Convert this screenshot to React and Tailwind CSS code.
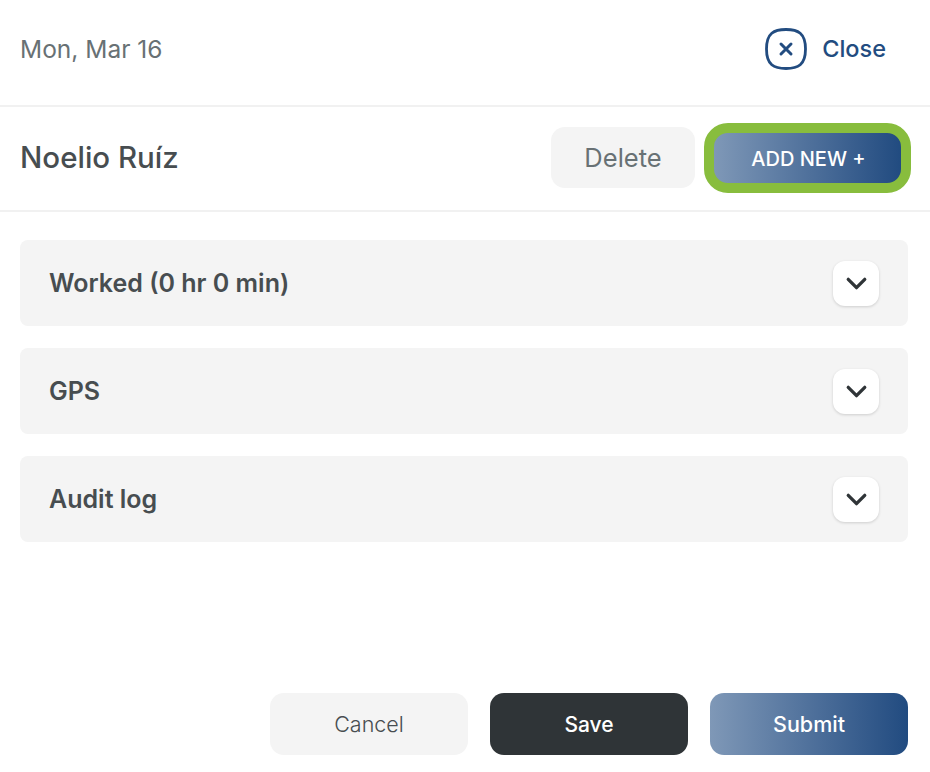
import { ChevronDown } from "lucide-react";

const sections = ["Worked (0 hr 0 min)", "GPS", "Audit log"];

function Section({ title }) {
  return (
    <div className="flex h-[86px] items-center justify-between rounded-[8px] bg-[#f4f4f4] pl-[29px] pr-[29px]">
      <span className="pt-[2px] text-[25px] font-semibold text-[#474d50]">{title}</span>
      <button className="flex h-[45px] w-[46px] items-center justify-center rounded-[12px] bg-white shadow-[0_1px_3px_rgba(0,0,0,0.16)]">
        <ChevronDown className="h-[33px] w-[33px] text-[#2f3437]" strokeWidth={2.4} />
      </button>
    </div>
  );
}

export default function App() {
  return (
    <div className="flex h-[772px] w-[930px] flex-col bg-white font-['Inter',sans-serif]">
      <header className="flex h-[107px] items-center justify-between border-b-2 border-[#f1f1f1] pb-[8px] pl-[20px] pr-[44px]">
        <span className="mt-[2px] text-[24.5px] text-[#687174]">Mon, Mar 16</span>
        <button className="flex items-center gap-[15px] text-[23.5px] font-medium text-[#224c80]">
          <svg width="42" height="42" viewBox="0 0 42 42" fill="none" stroke="#224c80">
            <path strokeWidth="2.8" d="M21 1.5C33 1.5 40.5 5 40.5 21S33 40.5 21 40.5 1.5 37 1.5 21 9 1.5 21 1.5Z" />
            <path strokeWidth="3" strokeLinecap="round" d="M16 16l10 10M26 16L16 26" />
          </svg>
          Close
        </button>
      </header>

      <div className="flex h-[105px] items-center justify-between border-b-2 border-[#f1f1f1] pb-[1px] pl-[20px] pr-[19px]">
        <span className="mb-[2px] text-[29.5px] font-medium text-[#474d50]">Noelio Ruíz</span>
        <div className="flex items-center gap-[9px]">
          <button className="mb-[1px] h-[61px] w-[144px] rounded-[14px] bg-[#f4f4f4] pt-[1px] text-[25.5px] text-[#687174]">Delete</button>
          <button className="h-[70px] w-[207px] rounded-[24px] border-[10px] border-[#88bd3d] bg-linear-to-r from-[#7f98b7] to-[#214b80] pl-[2px] pt-[1px] text-[20px] font-medium text-white">
            ADD NEW +
          </button>
        </div>
      </div>

      <div className="flex flex-col gap-[22px] pl-[20px] pr-[22px] pt-[28px]">
        {sections.map((s) => (
          <Section key={s} title={s} />
        ))}
      </div>

      <div className="mt-auto flex justify-end gap-[22px] pb-[17px] pr-[22px]">
        <button className="h-[62px] w-[198px] rounded-[14px] bg-[#f4f4f4] text-[21.5px] font-light text-[#474d50]">Cancel</button>
        <button className="h-[62px] w-[198px] rounded-[14px] bg-[#2f3437] pt-[1px] text-[21px] font-medium text-white">Save</button>
        <button className="h-[62px] w-[198px] rounded-[14px] bg-linear-to-r from-[#7f98b7] to-[#214b80] text-[21.5px] font-medium text-white">Submit</button>
      </div>
    </div>
  );
}
